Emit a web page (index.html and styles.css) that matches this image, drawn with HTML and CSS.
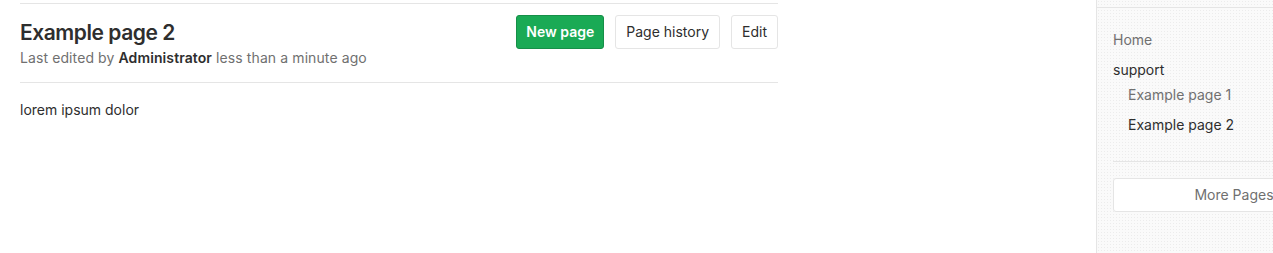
FILE: index.html
```html
<!DOCTYPE html>
<html lang="en">

<head>
  <meta charset="UTF-8" />
  <title>Example page 2 · Wiki</title>
  <link rel="stylesheet" href="styles.css">
</head>

<body>
  <div class="layout">
    <div class="content">
      <div class="wiki-header">
        <div class="wiki-title">
          <h2>Example page 2</h2>
          <div class="wiki-last-edit">
            Last edited by <strong>Administrator</strong> less than a minute ago
          </div>
        </div>
        <div class="wiki-actions">
          <a class="btn btn-new">New page</a>
          <a class="btn">Page history</a>
          <a class="btn">Edit</a>
        </div>
      </div>

      <div class="wiki-body">
        <p>lorem ipsum dolor</p>
      </div>
    </div>

    <aside class="wiki-sidebar">
      <div class="sidebar-top"></div>
      <ul class="wiki-pages">
        <li><a class="muted">Home</a></li>
        <li><a>support</a>
          <ul>
            <li><a class="muted">Example page 1</a></li>
            <li><a>Example page 2</a></li>
          </ul>
        </li>
      </ul>
      <div class="sidebar-divider"></div>
      <a class="btn btn-block">More Pages</a>
    </aside>
  </div>
</body>

</html>
```

FILE: styles.css
```css
body {
  margin: 0;
  font-family: Inter, "Noto Sans", sans-serif;
  font-size: 14px;
  color: #2e2e2e;
  background: #fff;
  overflow: hidden;
}

.layout {
  display: flex;
  height: 253px;
}

.content {
  width: 758px;
  margin-left: 20px;
  flex-shrink: 0;
}

.wiki-header {
  display: flex;
  justify-content: space-between;
  align-items: flex-start;
  border-top: 1px solid #e5e5e5;
  margin-top: 3px;
  padding: 11px 0 14px;
  border-bottom: 1px solid #e5e5e5;
}

.wiki-title h2 {
  margin: 4px 0 0;
  font-size: 21px;
  font-weight: 600;
  line-height: 28px;
  letter-spacing: -0.45px;
  color: #2e2e2e;
}

.wiki-last-edit {
  margin-top: 1px;
  color: #707070;
  line-height: 20px;
  letter-spacing: 0.1px;
}

.wiki-last-edit strong {
  color: #2e2e2e;
  font-weight: 600;
}

.wiki-actions {
  display: flex;
  gap: 11px;
}

.btn {
  display: inline-block;
  padding: 7px 10px;
  line-height: 18px;
  font-size: 14px;
  color: #2e2e2e;
  background: #fff;
  border: 1px solid #e5e5e5;
  border-radius: 3px;
  cursor: pointer;
}

.btn-new {
  padding: 7px 9px;
  background: #1aaa55;
  border-color: #168f48;
  color: #fff;
  font-weight: 600;
}

.wiki-body p {
  margin: 17px 0 0;
  line-height: 20px;
}

/* sidebar is wider than the window, only its left part shows */
.wiki-sidebar {
  margin-left: 318px;
  flex: 1;
  min-width: 0;
  overflow: hidden;
  border-left: 1px solid #e5e5e5;
  background-color: #fafafa;
  background-image: radial-gradient(#ececec 0.5px, transparent 0.6px);
  background-size: 3px 3px;
  padding-left: 16px;
}

.sidebar-top {
  margin-left: -16px;
  height: 7px;
  border-bottom: 1px solid #e5e5e5;
}

.wiki-pages,
.wiki-pages ul {
  list-style: none;
  margin: 0;
  padding: 0;
}

.wiki-pages {
  padding-top: 22px;
}

.wiki-pages ul {
  padding-left: 15px;
  margin-top: 5px;
}

.wiki-pages li {
  line-height: 20px;
  margin-bottom: 10px;
}

.wiki-pages a {
  color: #2e2e2e;
}

.wiki-pages a.muted {
  color: #707070;
}

.sidebar-divider {
  border-top: 1px solid #e5e5e5;
  margin-top: 26px;
}

.btn-block {
  display: block;
  margin-top: 16px;
  width: 242px;
  text-align: center;
  color: #707070;
  box-sizing: border-box;
}
```
